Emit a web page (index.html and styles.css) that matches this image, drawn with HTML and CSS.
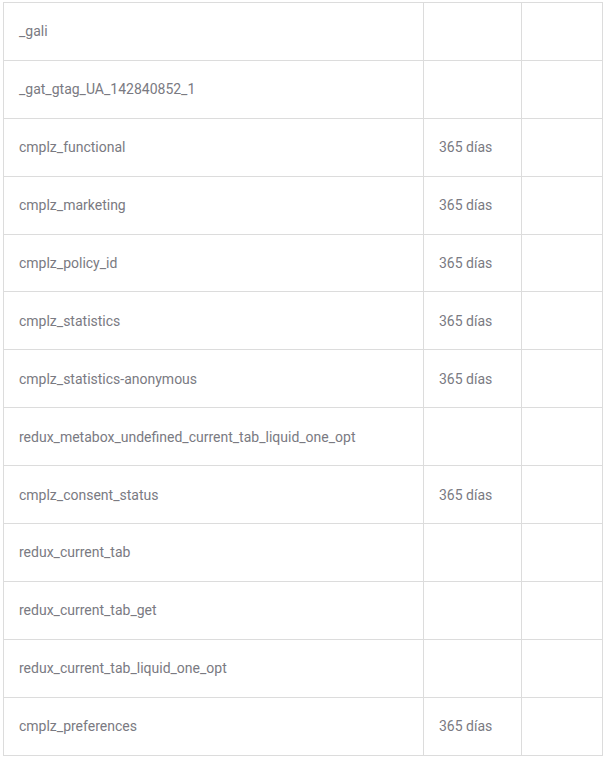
FILE: index.html
```html
<!DOCTYPE html>
<html>
<head>
<meta charset="utf-8">
<link rel="stylesheet" href="styles.css">
</head>
<body>
<table class="cookies">
<colgroup><col class="c-name"><col class="c-exp"><col class="c-extra"></colgroup>
<tbody>
<tr><td>_gali</td><td></td><td></td></tr>
<tr><td>_gat_gtag_UA_142840852_1</td><td></td><td></td></tr>
<tr><td>cmplz_functional</td><td>365 días</td><td></td></tr>
<tr><td>cmplz_marketing</td><td>365 días</td><td></td></tr>
<tr><td>cmplz_policy_id</td><td>365 días</td><td></td></tr>
<tr><td>cmplz_statistics</td><td>365 días</td><td></td></tr>
<tr><td>cmplz_statistics-anonymous</td><td>365 días</td><td></td></tr>
<tr><td>redux_metabox_undefined_current_tab_liquid_one_opt</td><td></td><td></td></tr>
<tr><td>cmplz_consent_status</td><td>365 días</td><td></td></tr>
<tr><td>redux_current_tab</td><td></td><td></td></tr>
<tr><td>redux_current_tab_get</td><td></td><td></td></tr>
<tr><td>redux_current_tab_liquid_one_opt</td><td></td><td></td></tr>
<tr><td>cmplz_preferences</td><td>365 días</td><td></td></tr>
</tbody>
</table>
</body>
</html>
```
FILE: styles.css
```css
html, body {
  margin: 0;
  padding: 0;
  background: #fff;
}
body {
  padding: 2px 0 0 3px;
  font-family: Roboto, "Liberation Sans", sans-serif;
  font-size: 14px;
  color: #7a7a82;
}
.cookies {
  border-collapse: collapse;
  table-layout: fixed;
  width: 599px;
}
.c-name { width: 420px; }
.c-exp { width: 98px; }
.c-extra { width: 81px; }
.cookies td {
  border: 1px solid #dcdcdc;
  height: 57.9px;
  box-sizing: border-box;
  padding: 0 15px;
  vertical-align: middle;
  line-height: 20px;
  white-space: nowrap;
}
```
